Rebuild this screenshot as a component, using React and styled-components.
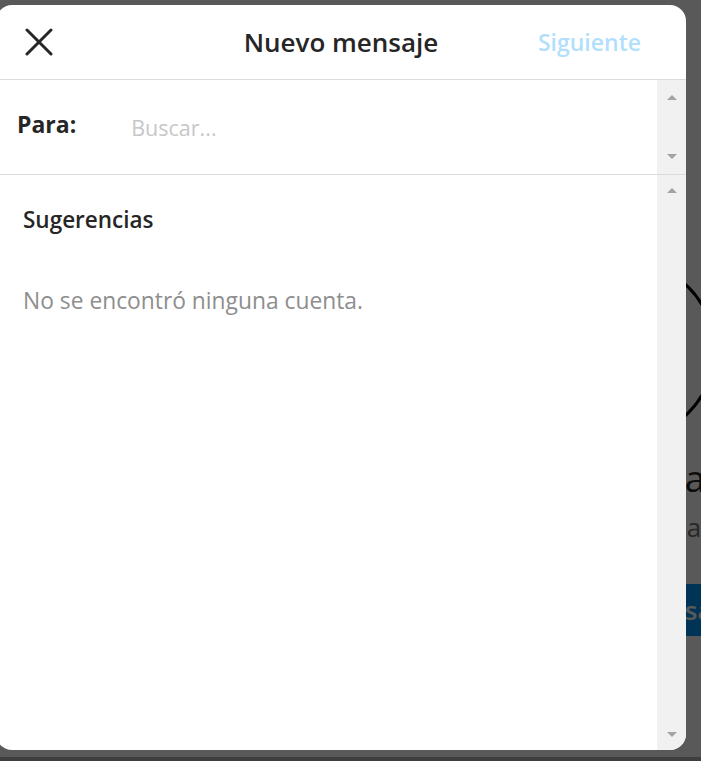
import React from 'react'
import styled, { createGlobalStyle } from 'styled-components'

const GlobalStyle = createGlobalStyle`
html, body {
    margin: 0;
    padding: 0;
}
body {
    width: 701px;
    height: 761px;
    overflow: hidden;
    background: #ffffff;
    font-family: "Open Sans", "Noto Sans", "Liberation Sans", sans-serif;
}
`

const Screen = styled.div`
position: relative;
width: 701px;
height: 761px;
overflow: hidden;
background: #ffffff;
`

/* the inbox page that sits behind the dimmed overlay */
const Inbox = styled.div`
width: 400px;
margin-left: 426px;
padding-top: 260px;
display: flex;
flex-direction: column;
align-items: center;
`

const Ring = styled.div`
width: 180px;
height: 180px;
box-sizing: border-box;
border: 3px solid #000000;
border-radius: 50%;
`

const InboxTitle = styled.h2`
margin: 16px 0 0 20px;
font-size: 37px;
line-height: 44px;
font-weight: 400;
color: #262626;
white-space: nowrap;
`

const InboxText = styled.p`
margin: 10px 0 0 -28px;
font-size: 26px;
line-height: 34px;
color: #737373;
white-space: nowrap;
`

const InboxButton = styled.button`
margin: 40px 0 0 26px;
height: 52px;
padding: 0 24px;
border: none;
border-radius: 12px;
background: #0095f6;
color: #ffffff;
font-family: inherit;
font-size: 26px;
font-weight: 600;
white-space: nowrap;
`

const Overlay = styled.div`
position: absolute;
inset: 0;
box-sizing: border-box;
background: rgba(0, 0, 0, 0.65);
border-bottom: 4px solid #3e3e3e;
`

const Modal = styled.div`
position: absolute;
left: -4px;
top: 5px;
width: 690px;
height: 745px;
background: #ffffff;
border-radius: 16px;
display: flex;
flex-direction: column;
overflow: hidden;
`

const Header = styled.div`
flex-shrink: 0;
height: 75px;
box-sizing: border-box;
padding: 0 29px;
display: grid;
grid-template-columns: 1fr auto 1fr;
align-items: center;
border-bottom: 1px solid #dbdbdb;
`

const CloseButton = styled.button`
justify-self: start;
display: flex;
padding: 0;
border: none;
background: none;
cursor: pointer;
`

const Title = styled.h1`
margin: 0;
font-size: 26px;
font-weight: 600;
color: #262626;
`

const NextButton = styled.button`
justify-self: end;
margin-right: 16px;
padding: 0;
border: none;
background: none;
font-family: inherit;
font-size: 23px;
font-weight: 600;
color: #b2dffc;
cursor: default;
`

const ToRow = styled.div`
flex-shrink: 0;
height: 95px;
box-sizing: border-box;
display: flex;
border-bottom: 1px solid #dbdbdb;
`

const ToField = styled.label`
flex: 1;
display: flex;
align-items: center;
gap: 55px;
padding-left: 21px;
`

const ToLabel = styled.span`
margin-bottom: 6px;
font-size: 23px;
font-weight: 700;
color: #262626;
`

const SearchInput = styled.input`
flex: 1;
border: none;
outline: none;
background: transparent;
padding: 0;
font-family: inherit;
font-size: 21.5px;
color: #262626;

&::placeholder {
    color: #c7c7c7;
}
`

const ScrollTrack = styled.div`
width: 29px;
flex-shrink: 0;
box-sizing: border-box;
padding: ${p => p.$pad}px 0;
background: #f1f1f1;
display: flex;
flex-direction: column;
justify-content: space-between;
align-items: center;
`

const Arrow = styled.span`
width: 0;
height: 0;
border-left: 5px solid transparent;
border-right: 5px solid transparent;
${p => p.$down
        ? 'border-top: 5px solid #a3a3a3;'
        : 'border-bottom: 5px solid #a3a3a3;'}
`

const Body = styled.div`
flex: 1;
min-height: 0;
display: flex;
`

const Suggestions = styled.div`
flex: 1;
padding: 31px 0 0 27px;
`

const SectionTitle = styled.h3`
margin: 0;
font-size: 22.5px;
line-height: 27px;
font-weight: 600;
color: #262626;
`

const EmptyText = styled.p`
margin: 54px 0 0;
font-size: 22.8px;
line-height: 27px;
color: #8e8e8e;
`

const Scrollbar = ({ pad }) => (
    <ScrollTrack $pad={pad}>
        <Arrow />
        <Arrow $down />
    </ScrollTrack>
)

const App = () => {
    return (
        <>
            <GlobalStyle />
            <Screen>
                <Inbox>
                    <Ring />
                    <InboxTitle>Tus mensajes</InboxTitle>
                    <InboxText>Envía fotos y mensajes privados a un amigo o grupo.</InboxText>
                    <InboxButton>Enviar mensaje</InboxButton>
                </Inbox>
                <Overlay />

                <Modal>
                    <Header>
                        <CloseButton aria-label="Cerrar">
                            <svg width="28" height="28" viewBox="0 0 28 28">
                                <path d="M2 2 L26 26 M26 2 L2 26" stroke="#262626" strokeWidth="3" strokeLinecap="round" fill="none" />
                            </svg>
                        </CloseButton>
                        <Title>Nuevo mensaje</Title>
                        <NextButton>Siguiente</NextButton>
                    </Header>

                    <ToRow>
                        <ToField>
                            <ToLabel>Para:</ToLabel>
                            <SearchInput placeholder="Buscar..." />
                        </ToField>
                        <Scrollbar pad={15} />
                    </ToRow>

                    <Body>
                        <Suggestions>
                            <SectionTitle>Sugerencias</SectionTitle>
                            <EmptyText>No se encontró ninguna cuenta.</EmptyText>
                        </Suggestions>
                        <Scrollbar pad={13} />
                    </Body>
                </Modal>
            </Screen>
        </>
    )
}

export default App
